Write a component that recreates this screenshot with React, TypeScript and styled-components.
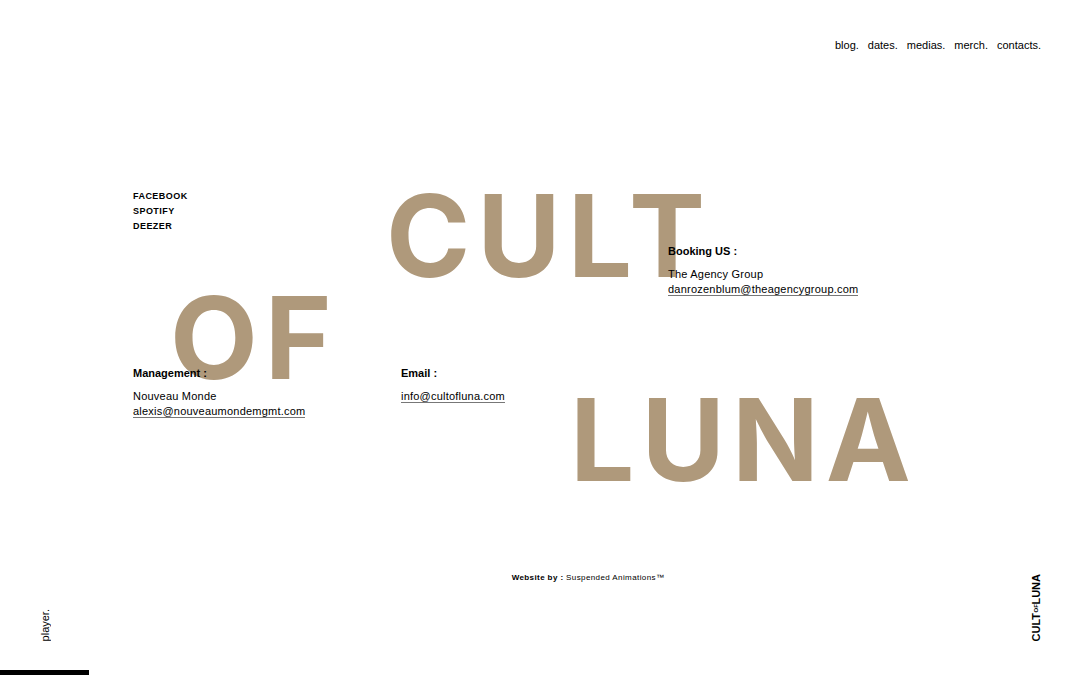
import React from "react";
import styled, { createGlobalStyle } from "styled-components";

const GlobalStyle = createGlobalStyle`
  *, *::before, *::after { box-sizing: border-box; }
  body {
    margin: 0;
    background: #fff;
    color: #000;
    font-family: "Liberation Sans", Arial, Helvetica, sans-serif;
  }
  a { color: inherit; text-decoration: none; }
  h1, h2, p, ul { margin: 0; padding: 0; font-weight: inherit; }
  ul { list-style: none; }
`;

const Page = styled.div`
  min-height: 100vh;
  display: flex;
  flex-direction: column;
`;

const Header = styled.header`
  display: flex;
  justify-content: flex-end;
  padding: 38px 39px 0;
`;

const Nav = styled.nav`
  display: flex;
  gap: 9px;
  font-size: 11px;
  line-height: 15px;
`;

const Stage = styled.main`
  flex: 1;
  display: grid;
  grid-template-columns: 1fr;
  grid-template-rows: auto;
  align-items: start;
  padding-top: 132px;
`;

const Title = styled.h1`
  grid-area: 1 / 1;
  display: flex;
  flex-direction: column;
  font-family: Inter, "Liberation Sans", sans-serif;
  font-size: 114px;
  line-height: 102px;
  font-weight: 700;
  letter-spacing: 7px;
  color: #af997b;
`;

const Word = styled.span<{ $indent: string }>`
  padding-left: ${(p) => p.$indent};
`;

const Details = styled.div`
  grid-area: 1 / 1;
  z-index: 1;
  display: grid;
  grid-template-columns: 268px 267px 1fr;
  grid-template-rows: 55px 122px auto;
  padding: 4px 0 0 133px;
`;

const Socials = styled.ul`
  grid-area: 1 / 1 / 3 / 2;
  font-size: 9px;
  line-height: 15px;
  font-weight: 700;
  letter-spacing: 0.05em;
  text-transform: uppercase;
`;

const Contact = styled.section<{ $area: string }>`
  grid-area: ${(p) => p.$area};
  font-size: 11px;
  line-height: 15px;
  letter-spacing: 0.02em;
`;

const ContactTitle = styled.h2`
  margin-bottom: 8px;
  font-size: 11px;
  font-weight: 700;
  letter-spacing: 0;
`;

const MailLink = styled.a`
  border-bottom: 1px solid #777;
`;

const Footer = styled.footer`
  display: grid;
  grid-template-columns: 1fr auto 1fr;
  padding: 0 38px 27px 39px;
`;

const Credit = styled.p`
  padding-left: 95px;
  font-size: 8px;
  line-height: 8px;
  letter-spacing: 0.05em;
`;

const Upright = styled.span`
  writing-mode: vertical-rl;
  transform: rotate(180deg);
`;

const PlayerButton = styled.button`
  justify-self: start;
  align-self: end;
  padding: 0;
  border: 0;
  background: none;
  color: inherit;
  font: 11px/12px "Liberation Sans", Arial, Helvetica, sans-serif;
  cursor: pointer;
`;

const Logo = styled.a`
  justify-self: end;
  align-self: end;
  font-size: 11px;
  line-height: 12px;
  font-weight: 700;
`;

const SmallOf = styled.span`
  display: inline-block;
  font-size: 6px;
  line-height: 12px;
`;

const Progress = styled.div`
  height: 5px;
`;

const ProgressFill = styled.div`
  width: 8.2%;
  height: 100%;
  background: #000;
`;

const links = ["blog", "dates", "medias", "merch", "contacts"];
const socials = ["Facebook", "Spotify", "Deezer"];
const contacts = [
  { title: "Booking US :", name: "The Agency Group", mail: "danrozenblum@theagencygroup.com", area: "2 / 3" },
  { title: "Management :", name: "Nouveau Monde", mail: "alexis@nouveaumondemgmt.com", area: "3 / 1" },
  { title: "Email :", name: "", mail: "info@cultofluna.com", area: "3 / 2" },
];

export default function App() {
  return (
    <Page>
      <GlobalStyle />
      <Header>
        <Nav>
          {links.map((l) => (
            <a key={l} href={`#${l}`}>{l}.</a>
          ))}
        </Nav>
      </Header>
      <Stage>
        <Title>
          <Word $indent="386px">CULT</Word>
          <Word $indent="170px">OF</Word>
          <Word $indent="570px">LUNA</Word>
        </Title>
        <Details>
          <Socials>
            {socials.map((s) => (
              <li key={s}><a href={`#${s.toLowerCase()}`}>{s}</a></li>
            ))}
          </Socials>
          {contacts.map((c) => (
            <Contact key={c.title} $area={c.area}>
              <ContactTitle>{c.title}</ContactTitle>
              {c.name && <p>{c.name}</p>}
              <p><MailLink href={`mailto:${c.mail}`}>{c.mail}</MailLink></p>
            </Contact>
          ))}
        </Details>
      </Stage>
      <Footer>
        <PlayerButton type="button"><Upright>player.</Upright></PlayerButton>
        <Credit>
          <b>Website by :</b> <a href="#studio">Suspended Animations™</a>
        </Credit>
        <Logo href="#home"><Upright>CULT<SmallOf>OF</SmallOf>LUNA</Upright></Logo>
      </Footer>
      <Progress><ProgressFill /></Progress>
    </Page>
  );
}
